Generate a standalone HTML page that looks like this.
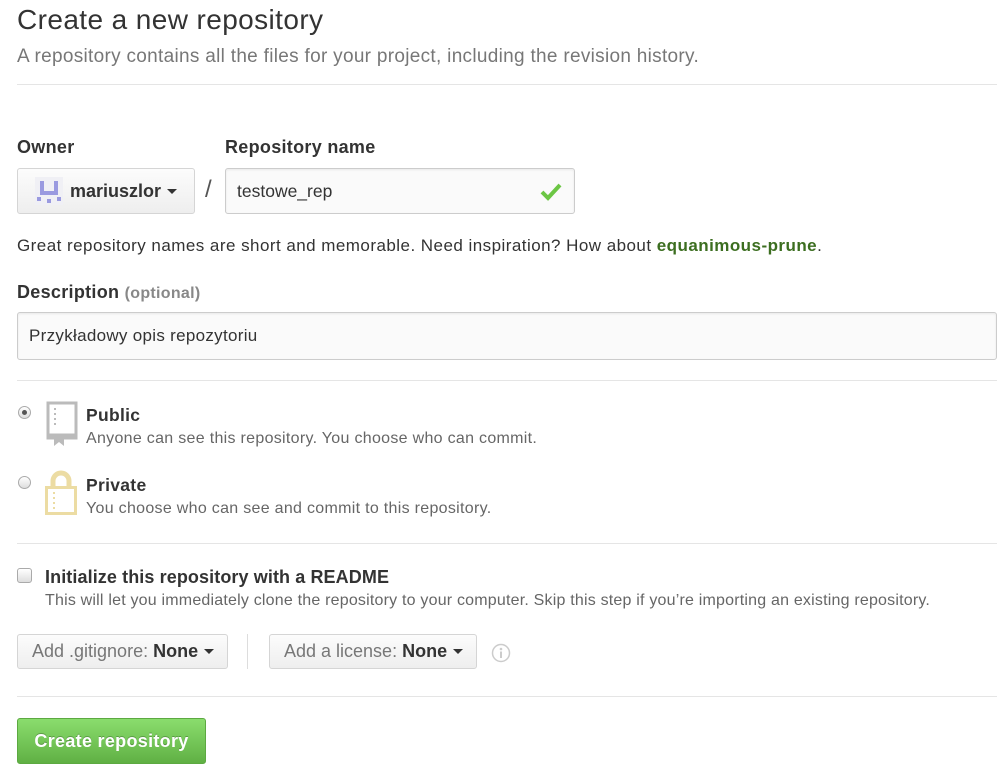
<!DOCTYPE html>
<html><head><meta charset="utf-8"><style>
body{margin:0;width:1000px;height:769px;background:#fff;font-family:"Liberation Sans",Arial,sans-serif;color:#333;position:relative;overflow:hidden}
.a{position:absolute;white-space:nowrap}
.hr{position:absolute;left:17px;width:980px;height:1px;background:#e5e5e5}
.btn{position:absolute;box-sizing:border-box;border:1px solid #d5d5d5;border-radius:3px;background:linear-gradient(#fcfcfc,#eee);font-size:18px;color:#777;display:flex;align-items:center;padding-left:14px}
.btn b{color:#333;margin-left:5px}
.caret{display:inline-block;width:0;height:0;border-left:5px solid transparent;border-right:5px solid transparent;border-top:5px solid #333;margin-left:6px}
.inp{position:absolute;box-sizing:border-box;border:1px solid #ccc;border-radius:3px;background:#fafafa;font-size:17.5px;color:#333;display:flex;align-items:center;padding-left:11px;box-shadow:inset 0 1px 2px rgba(0,0,0,.07)}
.radio{position:absolute;width:13px;height:13px;border:1px solid #aaa;border-radius:50%;background:linear-gradient(#fff,#ddd);box-sizing:border-box}
</style></head><body>
<div class="a" style="left:17px;top:4px;font-size:28px;letter-spacing:.4px;color:#333">Create a new repository</div>
<div class="a" style="left:17px;top:46px;font-size:19px;letter-spacing:.3px;color:#777">A repository contains all the files for your project, including the revision history.</div>
<div class="hr" style="top:84px"></div>

<div class="a" style="left:17px;top:137px;font-size:18px;letter-spacing:.3px;font-weight:bold">Owner</div>
<div class="a" style="left:225px;top:137px;font-size:18px;letter-spacing:.3px;font-weight:bold">Repository name</div>
<div class="btn" style="left:17px;top:168px;width:178px;height:46px;color:#333;font-weight:bold;padding-left:17px">
<svg width="28" height="28" viewBox="0 0 28 28" style="margin-right:7px"><rect width="28" height="28" fill="#f0f0f5"/><g fill="#9a9ae0"><rect x="5" y="4" width="4" height="12"/><rect x="19" y="4" width="4" height="12"/><rect x="5" y="14" width="18" height="4"/><rect x="2" y="20" width="4" height="4"/><rect x="22" y="20" width="4" height="4"/><rect x="12" y="22" width="4" height="4"/></g></svg>mariuszlor<span class="caret"></span></div>
<div class="a" style="left:205px;top:176px;font-size:24px;color:#555">/</div>
<div class="inp" style="left:225px;top:168px;width:350px;height:46px">testowe_rep</div>
<svg class="a" style="left:539px;top:182px" width="24" height="20" viewBox="0 0 24 20"><path d="M3 10 L9 16 L21 3" stroke="#6cc644" stroke-width="4" fill="none"/></svg>

<div class="a" style="left:17px;top:236px;font-size:17px;letter-spacing:.46px">Great repository names are short and memorable. Need inspiration? How about <b style="color:#3c6e20">equanimous-prune</b>.</div>

<div class="a" style="left:17px;top:282px;font-size:18px;letter-spacing:.3px;font-weight:bold">Description <span style="font-size:16px;color:#888">(optional)</span></div>
<div class="inp" style="left:17px;top:312px;width:980px;height:48px;font-size:17px;letter-spacing:.3px">Przykładowy opis repozytoriu</div>
<div class="hr" style="top:380px"></div>

<div class="radio" style="left:18px;top:406px"><div style="position:absolute;left:3px;top:3px;width:5px;height:5px;border-radius:50%;background:#555"></div></div>
<svg class="a" style="left:44px;top:401px" width="34" height="46" viewBox="0 0 34 46"><path d="M4 2 H32 V37 H4 Z" fill="none" stroke="#bbb" stroke-width="3"/><path d="M4 34 H32" stroke="#bbb" stroke-width="3"/><g fill="#bbb"><rect x="10" y="7" width="2" height="2"/><rect x="10" y="12" width="2" height="2"/><rect x="10" y="17" width="2" height="2"/><rect x="10" y="22" width="2" height="2"/><path d="M10 35 H20 V45 L15 41 L10 45Z"/></g></svg>
<div class="a" style="left:86px;top:405px;font-size:17.5px;letter-spacing:.3px;font-weight:bold">Public</div>
<div class="a" style="left:86px;top:430px;font-size:16px;letter-spacing:.3px;color:#666">Anyone can see this repository. You choose who can commit.</div>

<div class="radio" style="left:18px;top:476px"></div>
<svg class="a" style="left:44px;top:470px" width="34" height="46" viewBox="0 0 34 46"><path d="M9 17 V11 A8 8 0 0 1 25 11 V17" fill="none" stroke="#ecdca3" stroke-width="5"/><rect x="2.5" y="17.5" width="29" height="26" fill="none" stroke="#ecdca3" stroke-width="3"/><g fill="#ecdca3"><rect x="9" y="22" width="2" height="2"/><rect x="9" y="27" width="2" height="2"/><rect x="9" y="32" width="2" height="2"/><rect x="9" y="37" width="2" height="2"/></g></svg>
<div class="a" style="left:86px;top:475px;font-size:17.5px;letter-spacing:.3px;font-weight:bold">Private</div>
<div class="a" style="left:86px;top:500px;font-size:16px;letter-spacing:.3px;color:#666">You choose who can see and commit to this repository.</div>
<div class="hr" style="top:543px"></div>

<div class="a" style="left:17px;top:568px;width:15px;height:15px;box-sizing:border-box;border:1px solid #aaa;border-radius:3px;background:linear-gradient(#fff,#ddd)"></div>
<div class="a" style="left:45px;top:567px;font-size:18px;letter-spacing:.1px;font-weight:bold">Initialize this repository with a README</div>
<div class="a" style="left:45px;top:592px;font-size:16px;letter-spacing:.2px;color:#666">This will let you immediately clone the repository to your computer. Skip this step if you’re importing an existing repository.</div>

<div class="btn" style="left:17px;top:634px;width:211px;height:35px">Add .gitignore:<b>None</b><span class="caret"></span></div>
<div class="a" style="left:247px;top:634px;width:1px;height:35px;background:#ddd"></div>
<div class="btn" style="left:269px;top:634px;width:208px;height:35px">Add a license:<b>None</b><span class="caret"></span></div>
<svg class="a" style="left:491px;top:643px" width="20" height="20" viewBox="0 0 20 20"><circle cx="10" cy="10" r="8.5" fill="none" stroke="#ccc" stroke-width="1.5"/><circle cx="10" cy="6" r="1.3" fill="#ccc"/><rect x="9" y="8.5" width="2" height="6.5" fill="#ccc"/></svg>
<div class="hr" style="top:696px"></div>

<div class="a" style="left:17px;top:718px;width:189px;height:46px;box-sizing:border-box;border:1px solid #5ca941;border-radius:3px;background:linear-gradient(#8add6d,#60b044);color:#fff;font-weight:bold;font-size:18px;letter-spacing:.3px;display:flex;align-items:center;justify-content:center;text-shadow:0 -1px 0 rgba(0,0,0,.25)">Create repository</div>
</body></html>
